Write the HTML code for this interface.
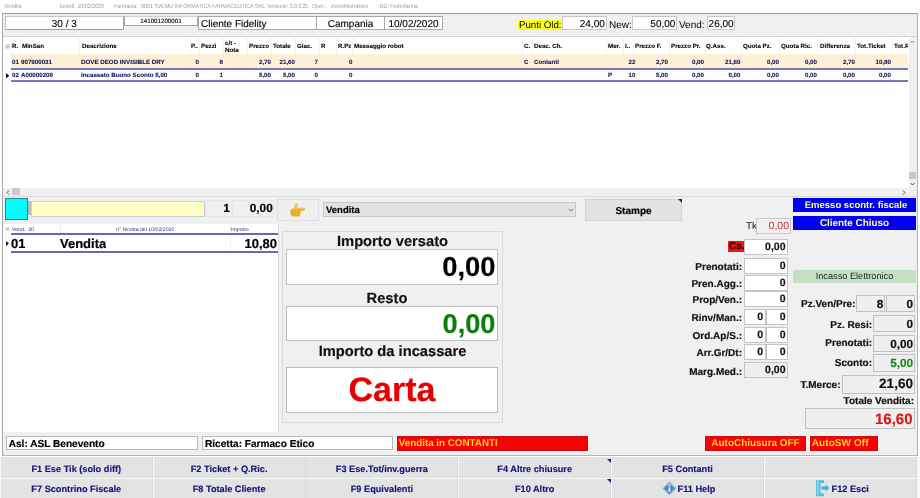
<!DOCTYPE html>
<html><head><meta charset="utf-8"><title>Vendita</title>
<style>
*{box-sizing:border-box;margin:0;padding:0}
html,body{width:920px;height:498px;overflow:hidden;background:#fff}
body{position:relative;font-family:"Liberation Sans",sans-serif;color:#000;text-rendering:geometricPrecision}
.a{position:absolute;white-space:nowrap;overflow:hidden}
.b{font-weight:bold;-webkit-text-stroke:.18px}
.r{text-align:right}
.c{text-align:center}
.title{top:2.6px;height:9px;font-size:6px;line-height:9px;color:#a0a0a0;transform:scaleX(.885);transform-origin:0 0}
.main{left:2px;top:13px;width:916px;height:442.8px;background:#f0f0f0;border:1px solid #a4a4a4;border-color:#9c9c9c #b4b4b4 #b4b4b4 #a8a8a8}
.tb{background:#fff;border:1px solid #a8a8a8;font-size:10px;-webkit-text-stroke:.12px}
.grid{left:3px;top:36px;width:914px;height:160px;background:#fff;border-top:1px solid #d0d0d0}
.gh{top:41.5px;height:10px;line-height:10px;font-size:6.2px;font-weight:bold;color:#000;-webkit-text-stroke:.08px #000}
.g1{top:58.0px;height:10px;line-height:10px;font-size:6.2px;font-weight:bold;color:#10105a;-webkit-text-stroke:.08px #10105a}
.g2{top:71px;height:10px;line-height:10px;font-size:6.2px;font-weight:bold;color:#10105a;-webkit-text-stroke:.08px #10105a}
.hl{background:#7878ba;height:2px}
.vs{top:37px;width:1px;height:17px;background:#f2f2f2}
.lbl{-webkit-text-stroke:.18px;font-size:10px;font-weight:bold;text-align:right;height:14px;line-height:14px;color:#111}
.ib{-webkit-text-stroke:.18px;background:#fff;border:1px solid #c4c4c4;font-size:10.5px;font-weight:bold;text-align:right;padding-right:1.5px;height:15.5px;line-height:13px;color:#111}
.gb{-webkit-text-stroke:.18px;background:#efefef;border:1px solid #c0c0c0;font-weight:bold;text-align:right;padding-right:.6px;color:#111;font-size:11.8px;line-height:16.2px}
.fb{-webkit-text-stroke:.15px;background:#e3e3e4;border-right:1px solid #dadada;font-size:9.2px;font-weight:bold;color:#14147a;text-align:center;width:152px;height:20.2px;line-height:21.8px}
.red{background:#fa0000;border:1px solid #c81010;color:#ffd428;font-size:9.8px;font-weight:bold;height:14.5px;line-height:12.5px;padding-left:1px}
.blue{background:#0000f0;color:#ffffa0;font-size:9.5px;font-weight:bold;text-align:center;height:14px;line-height:14px;left:793px;width:123px}
</style></head><body><div id="w" style="position:absolute;left:0;top:0;width:920px;height:498px;will-change:transform">
<!-- title bar -->
<div class="a title" style="left:4px">Vendita</div>
<div class="a title" style="left:60px">lunedì, 10/02/2020</div>
<div class="a title" style="left:114px">Farmacia:</div>
<div class="a title" style="left:141px">0001 SVEMU INFORMATICA FARMACEUTICA SRL</div>
<div class="a title" style="left:267px;letter-spacing:-.1px">Versione: 3.0.3.25</div>
<div class="a title" style="left:312px">Oper.:</div>
<div class="a title" style="left:330.5px;letter-spacing:.12px">Amministratore</div>
<div class="a title" style="left:380px">BD: Federfarma</div>

<div class="a main"></div>
<!-- top boxes -->
<div class="a tb c" style="left:4.6px;top:16px;width:119.4px;height:14.2px;line-height:15px;border-color:#c6c6c6 #a8a8a8 #9c9c9c #c0c0c0">30 / 3</div>
<div class="a tb c" style="left:124px;top:16px;width:74px;height:9.6px;line-height:10.6px;font-size:6.2px;border-top-color:#d0d0d0">141001200001</div>
<div class="a tb" style="left:198px;top:16px;width:119px;height:14px;line-height:15px;padding-left:2px">Cliente Fidelity</div>
<div class="a tb c" style="left:316px;top:16px;width:69px;height:14px;line-height:15px">Campania</div>
<div class="a tb c" style="left:384px;top:16px;width:59px;height:14px;line-height:15px">10/02/2020</div>
<div class="a" style="left:518.4px;top:19.8px;width:42.6px;height:10.2px;line-height:11.6px;background:#ffff20;font-size:9.7px;padding-left:.6px">Punti Old:</div>
<div class="a tb r" style="left:561.6px;top:16.2px;width:45.2px;height:14.2px;line-height:15px;padding-right:1px;border-color:#c8c8c8">24,00</div>
<div class="a" style="left:609px;top:20px;height:11px;line-height:11px;font-size:10px">New:</div>
<div class="a tb r" style="left:632.2px;top:16.2px;width:45.2px;height:14.2px;line-height:15px;padding-right:1px;border-color:#c8c8c8">50,00</div>
<div class="a" style="left:679px;top:20px;height:11px;line-height:11px;font-size:10px">Vend:</div>
<div class="a tb" style="left:706.6px;top:16.2px;width:28.8px;height:14.2px;line-height:15px;padding-left:1px;border-color:#c8c8c8">26,00</div>

<!-- main grid -->
<div class="a grid"></div>
<div class="a" style="left:11px;top:54.4px;width:897px;height:13.6px;background:#fdf0d6"></div>
<div class="a hl" style="left:11px;top:68px;width:897px"></div>
<div class="a hl" style="left:11px;top:80px;width:897px"></div>
<div class="a" style="left:3px;top:188px;width:914px;height:8px;background:#f0f0f0"></div>
<div class="a" style="left:908.5px;top:37px;width:8.5px;height:151px;background:#f0f0f0"></div>
<div class="a" style="left:909px;top:172px;width:7px;height:7px;background:#c8c8c8"></div>
<div class="a" style="left:12px;top:188px;width:8px;height:7px;background:#cdcdcd"></div>
<svg class="a" style="left:5.5px;top:189.5px" width="4" height="5" viewBox="0 0 4 5"><path d="M3 .5L1 2.5L3 4.5" fill="none" stroke="#444" stroke-width=".9"/></svg>
<svg class="a" style="left:902px;top:189.5px" width="4" height="5" viewBox="0 0 4 5"><path d="M1 .5L3 2.5L1 4.5" fill="none" stroke="#444" stroke-width=".9"/></svg>
<svg class="a" style="left:910px;top:40px" width="5" height="4" viewBox="0 0 5 4"><path d="M.5 3L2.5 1L4.5 3" fill="none" stroke="#777" stroke-width=".8"/></svg>
<svg class="a" style="left:910px;top:181.5px" width="5" height="4" viewBox="0 0 5 4"><path d="M.5 1L2.5 3L4.5 1" fill="none" stroke="#444" stroke-width=".9"/></svg>
<div class="a" style="left:5.2px;top:43.5px;font-size:5px;line-height:6px;color:#aaa">▦</div>

<div class="a vs" style="left:11px"></div><div class="a vs" style="left:19.5px"></div><div class="a vs" style="left:79px"></div><div class="a vs" style="left:190px"></div><div class="a vs" style="left:199px"></div><div class="a vs" style="left:223px"></div><div class="a vs" style="left:247px"></div><div class="a vs" style="left:271px"></div><div class="a vs" style="left:295px"></div><div class="a vs" style="left:319px"></div><div class="a vs" style="left:336px"></div><div class="a vs" style="left:352px"></div><div class="a vs" style="left:522px"></div><div class="a vs" style="left:532px"></div><div class="a vs" style="left:606px"></div><div class="a vs" style="left:623px"></div><div class="a vs" style="left:633px"></div><div class="a vs" style="left:669px"></div><div class="a vs" style="left:705px"></div><div class="a vs" style="left:741px"></div><div class="a vs" style="left:779px"></div><div class="a vs" style="left:817px"></div><div class="a vs" style="left:855px"></div><div class="a vs" style="left:892px"></div>
<div class="a gh" style="left:12px">R.</div><div class="a gh" style="left:22px">MinSan</div><div class="a gh" style="left:82px">Descrizione</div>
<div class="a gh" style="left:191px">P..</div><div class="a gh" style="left:201px">Pezzi</div>
<div class="a gh" style="left:225px;top:39.5px;height:16px;line-height:7.6px;white-space:normal;width:20px">c/t - Nota</div>
<div class="a gh" style="left:249px">Prezzo</div><div class="a gh" style="left:273px">Totale</div><div class="a gh" style="left:297px">Giac.</div>
<div class="a gh" style="left:321px">R</div><div class="a gh" style="left:338px">R.Pz</div><div class="a gh" style="left:354px">Messaggio robot</div>
<div class="a gh" style="left:524px">C.</div><div class="a gh" style="left:534px">Desc. Ch.</div>
<div class="a gh" style="left:608px">Mer.</div><div class="a gh" style="left:625px">I..</div><div class="a gh" style="left:635px">Prezzo F.</div>
<div class="a gh" style="left:671px">Prezzo Pr.</div><div class="a gh" style="left:706px">Q.Ass.</div><div class="a gh" style="left:743px">Quota Pz.</div>
<div class="a gh" style="left:781px">Quota Ric.</div><div class="a gh" style="left:820px">Differenza</div><div class="a gh" style="left:857px">Tot.Ticket</div>
<div class="a gh" style="left:894px;width:14px">Tot.R</div>

<!-- row 1 -->
<div class="a g1" style="left:12px">01</div><div class="a g1" style="left:21px">907900031</div><div class="a g1" style="left:81px">DOVE DEOD INVISIBLE DRY</div>
<div class="a g1 r" style="left:180px;width:19px">0</div><div class="a g1 r" style="left:200px;width:23px">8</div>
<div class="a g1 r" style="left:248px;width:23px">2,70</div><div class="a g1 r" style="left:272px;width:23px">21,60</div><div class="a g1 r" style="left:296px;width:22px">7</div>
<div class="a g1 r" style="left:337px;width:15.5px">0</div>
<div class="a g1" style="left:524px">C</div><div class="a g1" style="left:534px">Contanti</div>
<div class="a g1 r" style="left:620px;width:15.5px">22</div><div class="a g1 r" style="left:634px;width:34px">2,70</div><div class="a g1 r" style="left:670px;width:34px">0,00</div>
<div class="a g1 r" style="left:706px;width:34.5px">21,60</div><div class="a g1 r" style="left:742px;width:37px">0,00</div><div class="a g1 r" style="left:780px;width:37px">0,00</div>
<div class="a g1 r" style="left:819px;width:36px">2,70</div><div class="a g1 r" style="left:857px;width:34px">10,80</div>
<!-- row 2 -->
<svg class="a" style="left:6px;top:72.5px" width="3.4" height="5.4"><path d="M0 0L3.4 2.7L0 5.4Z" fill="#111"/></svg>
<div class="a g2" style="left:12px">02</div><div class="a g2" style="left:21px">A00000208</div><div class="a g2" style="left:81px">Incassato Buono Sconto 5,00</div>
<div class="a g2 r" style="left:180px;width:19px">0</div><div class="a g2 r" style="left:200px;width:23px">1</div>
<div class="a g2 r" style="left:248px;width:23px">5,00</div><div class="a g2 r" style="left:272px;width:23px">5,00</div><div class="a g2 r" style="left:296px;width:22px">0</div>
<div class="a g2 r" style="left:337px;width:15.5px">0</div>
<div class="a g2" style="left:608px">P</div>
<div class="a g2 r" style="left:620px;width:15.5px">10</div><div class="a g2 r" style="left:634px;width:34px">5,00</div><div class="a g2 r" style="left:670px;width:34px">0,00</div>
<div class="a g2 r" style="left:706px;width:34.5px">0,00</div><div class="a g2 r" style="left:742px;width:37px">0,00</div><div class="a g2 r" style="left:780px;width:37px">0,00</div>
<div class="a g2 r" style="left:819px;width:36px">0,00</div><div class="a g2 r" style="left:857px;width:34px">0,00</div>

<div class="a" style="left:3px;top:195.6px;width:914px;height:1px;background:#dcdcdc"></div>
<!-- input row -->
<div class="a" style="left:5px;top:198px;width:23px;height:22px;background:#00ffff;border:1px solid #208888"></div>
<div class="a" style="left:28px;top:201px;width:3px;height:14px;background:#bcbcbc"></div>
<div class="a" style="left:31px;top:201px;width:174px;height:16px;background:#ffffc6;border:1px solid #c6d2d2"></div>
<div class="a b r" style="left:205px;top:199.6px;width:27px;height:17.6px;line-height:14.4px;font-size:11.8px;border:1px solid #e7e7e7;padding-right:1.2px">1</div>
<div class="a b r" style="left:232.4px;top:199.6px;width:42px;height:17.6px;line-height:14.4px;font-size:11.8px;border:1px solid #e7e7e7;padding-right:.7px">0,00</div>
<div class="a" style="left:277.3px;top:199.2px;width:41.5px;height:22px;background:#efefef;border:1px solid #dedede"></div>
<svg class="a" style="left:290px;top:202.5px" width="16" height="14" viewBox="0 0 16 14"><path d="M4.4 5.2C4.3 3.4 4.9 1.6 5.7 .6C6.5 .2 7.6 .8 7.6 1.8L7.4 4.8L13.9 4.8C15.3 4.8 15.3 7.6 13.9 7.6L10.6 7.7C11 8.4 10.9 9.2 10.4 9.6C10.7 10.3 10.5 11 10 11.4C10.2 12.4 9.6 13.5 8.6 13.5L3.6 13.5C1.6 13.5 .3 12 .3 10L.3 8.4C.3 6.4 1.8 5.2 4.4 5.2Z" fill="#e7ae30"/><path d="M4.9 5.4C4.8 3.8 5.2 2.2 5.9 1.1C6.5 .8 7.1 1.2 7.1 1.9L6.9 5.6Z" fill="#ecc48c"/><path d="M2.2 6.6C3.6 5.8 6 5.8 7.6 5.8L13.6 5.7" fill="none" stroke="#f2cc5c" stroke-width=".9" stroke-linecap="round"/></svg>
<div class="a b" style="left:323px;top:202px;width:253px;height:15px;line-height:15.0px;font-size:9.5px;background:#e2e2e2;border:1px solid #c8c8c8;padding-left:2px">Vendita</div>
<svg class="a" style="left:568px;top:208px" width="6" height="4" viewBox="0 0 6 4"><path d="M.8 .8L3 3L5.2 .8" fill="none" stroke="#555" stroke-width=".8"/></svg>
<div class="a b c" style="left:585px;top:199px;width:97px;height:22px;line-height:24.0px;font-size:10px;background:#e2e2e2;border:1px solid #d4d4d4">Stampe</div>
<svg class="a" style="left:677px;top:199px" width="5" height="5"><path d="M1 0H5V4Z" fill="#1a1a80"/></svg>

<!-- small grid -->
<div class="a" style="left:3px;top:224px;width:276px;height:208px;background:#fff;border-right:1px solid #dcdcdc"></div>
<div class="a" style="left:5.4px;top:226px;font-size:4px;line-height:5px;color:#aaa">▦</div>
<div class="a" style="left:59.5px;top:224px;width:1px;height:9.5px;background:#ececec"></div><div class="a" style="left:229.5px;top:224px;width:1px;height:27px;background:#f0f0f0"></div>
<div class="a" style="left:12px;top:225.6px;height:8px;line-height:8px;font-size:5.2px;color:#2c2c90">Vend.: 30</div>
<div class="a" style="left:116px;top:225.6px;height:8px;line-height:8px;font-size:5.2px;color:#2c2c90">n° Ricetta del 10/02/2020</div>
<div class="a" style="left:231px;top:225.6px;height:8px;line-height:8px;font-size:5.2px;color:#2c2c90">Importo</div>
<div class="a hl" style="left:11px;top:233.4px;width:267px;background:#6868b0;height:2px"></div>
<div class="a hl" style="left:11px;top:250.6px;width:267px;background:#6868b0;height:2px"></div>
<svg class="a" style="left:6px;top:240.5px" width="3" height="5"><path d="M0 0L3 2.5L0 5Z" fill="#111"/></svg>
<div class="a b" style="left:11px;top:235.6px;height:16px;line-height:16px;font-size:13px">01</div>
<div class="a b" style="left:60px;top:235.6px;height:16px;line-height:16px;font-size:13px">Vendita</div>
<div class="a b r" style="left:230px;top:235.6px;width:47px;height:16px;line-height:16px;font-size:13px">10,80</div>

<!-- center panel -->
<div class="a" style="left:282px;top:231px;width:221px;height:192px;background:#f0f0f0;border:1px solid #dadada"></div>
<div class="a b c" style="left:282px;top:234.0px;width:221px;height:17px;line-height:17px;font-size:14.7px;color:#111">Importo versato</div>
<div class="a b r" style="left:286px;top:248.6px;width:212px;height:36px;line-height:34.6px;font-size:27.4px;background:#fff;border:1px solid #c2c2c2;padding-right:1.5px">0,00</div>
<div class="a b c" style="left:276.5px;top:291.0px;width:221px;height:17px;line-height:17px;font-size:14.7px;color:#111">Resto</div>
<div class="a b r" style="left:286px;top:306.2px;width:212px;height:35.2px;line-height:33.6px;font-size:27.2px;background:#fff;border:1px solid #bcbcbc;padding-right:1.5px;color:#0c800c">0,00</div>
<div class="a b c" style="left:282px;top:344.0px;width:221px;height:17px;line-height:17px;font-size:14.7px;color:#111">Importo da incassare</div>
<div class="a b c" style="left:286px;top:367px;width:212px;height:46px;line-height:44.0px;font-size:34px;background:#fff;border:1px solid #bcbcbc;color:#e80000">Carta</div>

<!-- middle-right column -->
<div class="a" style="left:746px;top:220px;height:14px;line-height:14px;font-size:10px;color:#111">Tk</div>
<div class="a r" style="left:756px;top:218.4px;width:35px;height:15.6px;line-height:15.0px;font-size:10.5px;background:#f0f0f0;border:1px solid #c8c8c8;color:#c43030;padding-right:1px">0,00</div>
<div class="a b" style="left:728px;top:241px;width:17px;height:11px;line-height:11px;font-size:10px;background:#e81818;color:#5c0000;-webkit-text-stroke:.45px #5c0000;padding-left:1px">Cs.</div>
<div class="a ib" style="left:744px;top:239px;width:44px;height:16px;line-height:15.0px">0,00</div>
<div class="a lbl" style="left:670px;top:261.2px;width:72px">Prenotati:</div><div class="a ib" style="left:744px;top:258.4px;width:44px;line-height:15.0px">0</div>
<div class="a lbl" style="left:670px;top:277.6px;width:72px">Pren.Agg.:</div><div class="a ib" style="left:744px;top:275px;width:44px;line-height:15.0px">0</div>
<div class="a lbl" style="left:670px;top:293.9px;width:72px">Prop/Ven.:</div><div class="a ib" style="left:744px;top:291.3px;width:44px;line-height:15.0px">0</div>
<div class="a lbl" style="left:670px;top:312.4px;width:72px">Rinv/Man.:</div><div class="a ib" style="left:744px;top:309px;width:21.5px;line-height:15.0px">0</div><div class="a ib" style="left:766px;top:309px;width:22px;line-height:15.0px">0</div>
<div class="a lbl" style="left:670px;top:330px;width:72px">Ord.Ap/S.:</div><div class="a ib" style="left:744px;top:327px;width:21.5px;line-height:15.0px">0</div><div class="a ib" style="left:766px;top:327px;width:22px;line-height:15.0px">0</div>
<div class="a lbl" style="left:670px;top:346.6px;width:72px">Arr.Gr/Dt:</div><div class="a ib" style="left:744px;top:344.4px;width:21.5px;line-height:15.0px">0</div><div class="a ib" style="left:766px;top:344.4px;width:22px;line-height:15.0px">0</div>
<div class="a lbl" style="left:670px;top:365.9px;width:72px">Marg.Med.:</div><div class="a ib" style="left:744px;top:362px;width:44px;background:#efefef;line-height:15.0px">0,00</div>

<!-- right column -->
<div class="a blue" style="top:198.3px;padding-left:3px;line-height:16.0px">Emesso scontr. fiscale</div>
<div class="a blue" style="top:216px;font-size:9.9px;line-height:16.0px">Cliente Chiuso</div>
<div class="a c" style="left:793px;top:270px;width:123px;height:13.2px;line-height:13px;font-size:9.2px;background:#c4e0c4;color:#222">Incasso Elettronico</div>
<div class="a lbl" style="left:790px;top:298px;width:65.5px">Pz.Ven/Pre:</div>
<div class="a gb" style="left:856.3px;top:295.3px;width:28.7px;height:17px">8</div>
<div class="a gb" style="left:885.5px;top:295.3px;width:29.2px;height:17px">0</div>
<div class="a lbl" style="left:800px;top:318.6px;width:72px">Pz. Resi:</div>
<div class="a gb" style="left:873px;top:315.1px;width:41.7px;height:17.3px">0</div>
<div class="a lbl" style="left:800px;top:337.4px;width:72px">Prenotati:</div>
<div class="a gb" style="left:873px;top:334.9px;width:41.7px;height:17.3px">0,00</div>
<div class="a lbl" style="left:800px;top:357.4px;width:72px">Sconto:</div>
<div class="a gb" style="left:873px;top:354.4px;width:41.7px;height:17.3px;color:#189018">5,00</div>
<div class="a lbl" style="left:790px;top:378.5px;width:50.5px">T.Merce:</div>
<div class="a gb" style="left:842px;top:375.3px;width:72.7px;height:18.4px;line-height:15.4px;font-size:13.6px">21,60</div>
<div class="a lbl" style="left:820px;top:394.5px;width:94px">Totale Vendita:</div>
<div class="a gb" style="left:805px;top:408.4px;width:109.7px;height:21px;line-height:22.4px;font-size:15px;color:#d81818;padding-right:1.2px">16,60</div>

<!-- bottom boxes -->
<div class="a b" style="left:6.4px;top:436px;width:191.6px;height:14px;line-height:15.0px;font-size:10.1px;background:#fff;border:1px solid #b8b8b8;padding-left:1.3px">Asl: ASL Benevento</div>
<div class="a b" style="left:202px;top:436px;width:191px;height:14px;line-height:15.0px;font-size:10.1px;background:#fff;border:1px solid #b8b8b8;padding-left:2px">Ricetta: Farmaco Etico</div>
<div class="a red" style="left:396.8px;top:436.2px;width:191.4px;line-height:14.5px">Vendita in CONTANTI</div>
<div class="a red c" style="left:705px;top:436.2px;width:101px;padding-left:0;font-size:9.95px;line-height:14.5px">AutoChiusura OFF</div>
<div class="a red" style="left:810px;top:436.2px;width:68px;font-size:9.95px;letter-spacing:.1px;padding-left:.8px;line-height:14.5px">AutoSW Off</div>

<!-- function buttons -->
<div class="a" style="left:0;top:456.5px;width:920px;height:42px;background:#f7f7f7"></div>
<div class="a fb" style="left:0.8px;top:457.4px;line-height:24px">F1 Ese Tik (solo diff)</div>
<div class="a fb" style="left:153.6px;top:457.4px;line-height:24px">F2 Ticket + Q.Ric.</div>
<div class="a fb" style="left:306.4px;top:457.4px;line-height:24px">F3 Ese.Tot/inv.guerra</div>
<div class="a fb" style="left:459.2px;top:457.4px;line-height:24px">F4 Altre chiusure</div>
<div class="a fb" style="left:612.0px;top:457.4px;line-height:24px">F5 Contanti</div>
<div class="a fb" style="left:764.8px;top:457.4px;line-height:24px"></div>
<div class="a fb" style="left:0.8px;top:478.5px;line-height:20.8px">F7 Scontrino Fiscale</div>
<div class="a fb" style="left:153.6px;top:478.5px;line-height:20.8px">F8 Totale Cliente</div>
<div class="a fb" style="left:306.4px;top:478.5px;line-height:20.8px">F9 Equivalenti</div>
<div class="a fb" style="left:459.2px;top:478.5px;line-height:20.8px">F10 Altro</div>
<div class="a fb" style="left:612.0px;top:478.5px;line-height:20.8px;text-align:left;padding-left:65.6px">F11 Help</div>
<div class="a fb" style="left:764.8px;top:478.5px;line-height:20.8px;text-align:left;padding-left:66.8px">F12 Esci</div>
<svg class="a" style="left:606px;top:459px" width="5" height="5"><path d="M1 0H5V4Z" fill="#1a1a80"/></svg>
<svg class="a" style="left:606px;top:479px" width="5" height="5"><path d="M1 0H5V4Z" fill="#1a1a80"/></svg>
<svg class="a" style="left:662px;top:481.4px" width="14.8" height="14.8" viewBox="0 0 14 14"><path d="M7 .7L13.3 7L7 13.3L.7 7Z" fill="#5f8fbd" stroke="#b2cbe2" stroke-width="1.1"/><path d="M7 3L11 7L7 11L3 7Z" fill="#4f81b3"/><rect x="6.1" y="6" width="1.8" height="4.2" fill="#eef4fa"/><circle cx="7" cy="4.2" r="1.05" fill="#eef4fa"/></svg>
<svg class="a" style="left:816px;top:480px" width="14" height="17" viewBox="0 0 14 17"><path d="M0 .2H8V2.9H4.6V13.5H8V16.2H0Z" fill="#4dbfda"/><path d="M.8 1H3V15.4H.8Z" fill="#7fd4e8"/><path d="M5.4 6.6H9.4V4.4L13.4 8L9.4 11.6V9.4H5.4Z" fill="#3ab2e0"/></svg>
</div></body></html>
